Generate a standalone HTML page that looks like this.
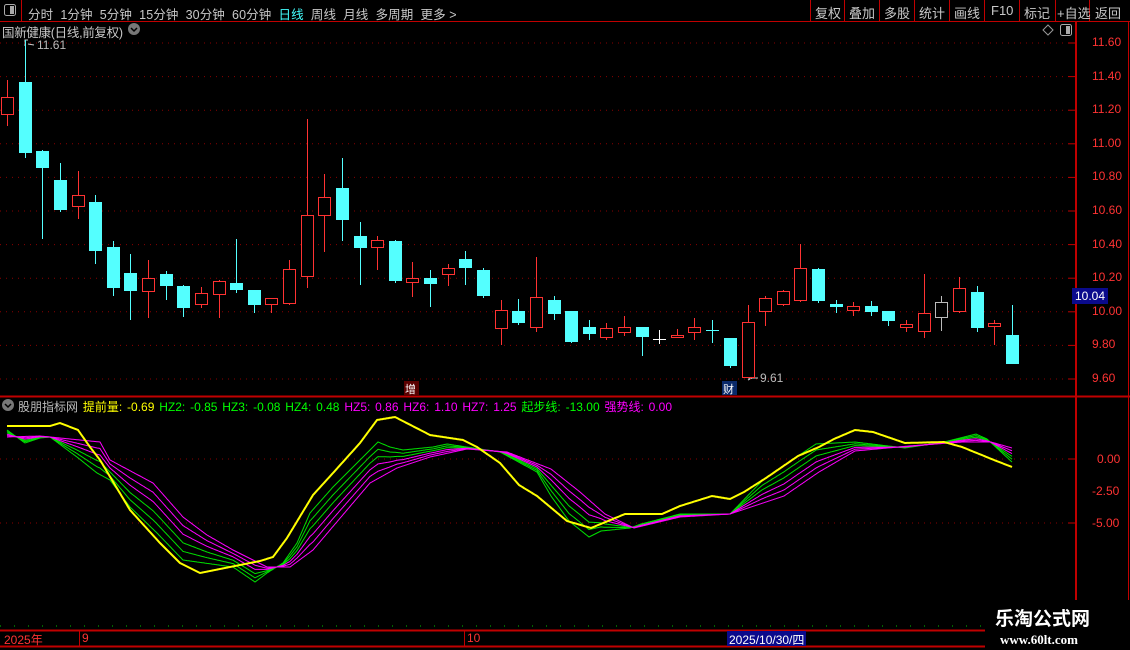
<!DOCTYPE html>
<html><head><meta charset="utf-8"><style>
*{margin:0;padding:0;box-sizing:border-box}
body{width:1130px;height:650px;background:#000;overflow:hidden;position:relative;font-family:"Liberation Sans","Noto Sans CJK SC",sans-serif;color:#c8c8c8}
.t{position:absolute;white-space:nowrap}
</style></head><body>
<svg id="s" width="1130" height="650" style="position:absolute;left:0;top:0" xmlns="http://www.w3.org/2000/svg">
<rect x="0" y="0" width="1130" height="650" fill="#000"/>
<line x1="0" y1="21.5" x2="1130" y2="21.5" stroke="#c00000"/>
<line x1="21.5" y1="0" x2="21.5" y2="21" stroke="#c00000"/>
<rect x="4.5" y="4.5" width="11" height="11" rx="2" fill="none" stroke="#aaa"/>
<rect x="10" y="6" width="4" height="8" fill="#aaa"/>
<g stroke="#c00000">
<line x1="810.5" y1="0" x2="810.5" y2="21"/><line x1="844.5" y1="0" x2="844.5" y2="21"/><line x1="879.5" y1="0" x2="879.5" y2="21"/><line x1="914.5" y1="0" x2="914.5" y2="21"/><line x1="949.5" y1="0" x2="949.5" y2="21"/><line x1="984.5" y1="0" x2="984.5" y2="21"/><line x1="1019.5" y1="0" x2="1019.5" y2="21"/><line x1="1055.5" y1="0" x2="1055.5" y2="21"/><line x1="1089.5" y1="0" x2="1089.5" y2="21"/>
</g>
<line x1="1076" y1="21" x2="1076" y2="630" stroke="#c00000" stroke-width="2"/>
<line x1="1128.5" y1="21" x2="1128.5" y2="630" stroke="#c00000"/>
<line x1="0" y1="396.5" x2="1130" y2="396.5" stroke="#c00000" stroke-width="2"/>
<line x1="0" y1="630.5" x2="985" y2="630.5" stroke="#c00000" stroke-width="2"/>
<line x1="0" y1="646.5" x2="985" y2="646.5" stroke="#c00000" stroke-width="2"/>
<line x1="0" y1="626" x2="985" y2="626" stroke="#00c000" stroke-dasharray="1 13"/>
<line x1="79.5" y1="631" x2="79.5" y2="646" stroke="#c00000"/>
<line x1="464.5" y1="631" x2="464.5" y2="646" stroke="#c00000"/>
<rect x="727" y="631" width="79" height="15" fill="#0a0a8c"/>
<path d="M1048 25 L1053 30 L1048 35 L1043 30 Z" fill="none" stroke="#999"/>
<rect x="1060.5" y="24.5" width="11" height="11" rx="2" fill="none" stroke="#aaa"/>
<rect x="1066" y="26" width="4" height="8" fill="#aaa"/>
<circle cx="134" cy="29" r="6" fill="#777"/><path d="M131 28 L134 31 L137 28" stroke="#000" fill="none" stroke-width="1.5"/>
<circle cx="8" cy="405" r="6" fill="#777"/><path d="M5 404 L8 407 L11 404" stroke="#000" fill="none" stroke-width="1.5"/>
<rect x="1072" y="288" width="36" height="16" fill="#0a0a8c"/>
<rect x="404" y="381" width="15" height="14" fill="#5a0000"/>
<rect x="722" y="381" width="15" height="14" fill="#0a2a6a"/>
<path d="M25 46 L25 40 L28 40 M28 44 L34 45" stroke="#ccc" fill="none"/>
<path d="M748 376 L752 378 L748 380 M748 378 L758 378" stroke="#ccc" fill="none"/>
<g id="grid"></g><g id="cdl"></g><g id="ind"></g>
<rect x="985" y="600" width="145" height="50" fill="#000"/>
</svg>
<div class="t" style="left:28px;top:4px;font-size:12.5px;letter-spacing:0.1px">分时&nbsp; 1分钟&nbsp; 5分钟&nbsp; 15分钟&nbsp; 30分钟&nbsp; 60分钟&nbsp; <span style="color:#4ff">日线</span>&nbsp; 周线&nbsp; 月线&nbsp; 多周期&nbsp; 更多 &gt;</div>
<div class="t" style="left:815px;top:3px;font-size:13px">复权</div>
<div class="t" style="left:849px;top:3px;font-size:13px">叠加</div>
<div class="t" style="left:884px;top:3px;font-size:13px">多股</div>
<div class="t" style="left:919px;top:3px;font-size:13px">统计</div>
<div class="t" style="left:954px;top:3px;font-size:13px">画线</div>
<div class="t" style="left:991px;top:3px;font-size:13px">F10</div>
<div class="t" style="left:1024px;top:3px;font-size:13px">标记</div>
<div class="t" style="left:1057px;top:3px;font-size:13px">+自选</div>
<div class="t" style="left:1095px;top:3px;font-size:13px">返回</div>
<div class="t" style="left:2px;top:22px;font-size:12.5px;letter-spacing:-0.3px">国新健康(日线,前复权)</div>
<div class="t" style="left:37px;top:38px;font-size:12px;color:#bbb">11.61</div>
<div class="t" style="left:760px;top:371px;font-size:12px;color:#bbb">9.61</div>
<div class="t" style="left:405px;top:381px;font-size:11px;color:#fff">增</div>
<div class="t" style="left:723px;top:381px;font-size:11px;color:#fff">财</div>
<div class="t" style="left:1075px;top:289px;font-size:12px;color:#fff">10.04</div>
<div id="ax"></div>
<div class="t" style="left:18px;top:398px;font-size:12px;word-spacing:1.5px"><span style="color:#bbb">股朋指标网</span> <span style="color:#ff0">提前量: -0.69</span> <span style="color:#0f0">HZ2: -0.85 HZ3: -0.08 HZ4: 0.48</span> <span style="color:#f0f">HZ5: 0.86 HZ6: 1.10 HZ7: 1.25</span> <span style="color:#0f0">起步线: -13.00</span> <span style="color:#f0f">强势线: 0.00</span></div>
<div class="t" style="left:1097px;top:452px;font-size:12px;color:#f33">0.00</div>
<div class="t" style="left:1092px;top:484px;font-size:12px;color:#f33">-2.50</div>
<div class="t" style="left:1092px;top:516px;font-size:12px;color:#f33">-5.00</div>
<div class="t" style="left:4px;top:631px;font-size:12px;color:#f33">2025年</div>
<div class="t" style="left:82px;top:631px;font-size:12px;color:#f33">9</div>
<div class="t" style="left:467px;top:631px;font-size:12px;color:#f33">10</div>
<div class="t" style="left:729px;top:631px;font-size:12px;color:#fff">2025/10/30/四</div>
<div class="t" style="left:995px;top:607px;font-size:19px;font-weight:bold;color:#fff;font-family:'Noto Sans CJK SC',sans-serif;line-height:22px">乐淘公式网</div>
<div class="t" style="left:1000px;top:632px;font-size:13px;font-weight:bold;color:#fff;font-family:'Liberation Serif',serif">www.60lt.com</div>
<script>
var NS="http://www.w3.org/2000/svg";
function el(p,t,a){var e=document.createElementNS(NS,t);for(var k in a)e.setAttribute(k,a[k]);p.appendChild(e);return e;}
var g=document.getElementById('grid'),ax=document.getElementById('ax');
for(var i=0;i<11;i++){var p=11.6-i*0.2,y=43+i*33.6;
el(g,'line',{x1:0,y1:y,x2:1068,y2:y,stroke:'#8a0000','stroke-dasharray':'1 5'});
el(g,'line',{x1:1068,y1:y,x2:1076,y2:y,stroke:'#c00000'});
var d=document.createElement('div');d.className='t';d.style.cssText='left:1092px;top:'+(y-8)+'px;font-size:12px;color:#f33';d.textContent=p.toFixed(2);ax.appendChild(d);}
[459,523].forEach(function(y){el(g,'line',{x1:0,y1:y,x2:1068,y2:y,stroke:'#8a0000','stroke-dasharray':'1 5'});el(g,'line',{x1:1068,y1:y,x2:1076,y2:y,stroke:'#c00000'});});
var C=[[7,97,114,80,126,1],[25,82,153,40,158,0],[42,151,168,150,239,0],[60,180,210,163,212,0],[78,195,206,171,219,1],[95,202,251,195,264,0],[113,247,288,241,296,0],[130,273,291,254,320,0],[148,278,291,260,318,1],[166,274,286,271,300,0],[183,286,308,285,317,0],[201,293,304,287,308,1],[219,281,294,280,318,1],[236,283,290,239,293,0],[254,290,305,290,313,0],[271,298,304,298,313,1],[289,269,303,260,305,1],[307,215,276,119,288,1],[324,197,215,174,252,1],[342,188,220,158,241,0],[360,236,248,222,285,0],[377,240,247,236,270,1],[395,241,281,240,283,0],[412,278,282,262,297,1],[430,278,284,270,307,0],[448,268,274,264,286,1],[465,259,268,251,285,0],[483,270,296,268,298,0],[501,310,328,300,345,1],[518,311,323,299,325,0],[536,297,327,257,332,1],[554,300,314,296,320,0],[571,311,342,311,343,0],[589,327,334,320,340,0],[606,328,337,323,340,1],[624,327,332,316,336,1],[642,327,337,327,356,0],[659,339,339,330,344,2],[677,335,337,329,337,1],[694,327,332,318,340,1],[712,330,330,320,343,3],[730,338,366,338,368,0],[748,322,377,305,378,1],[765,298,311,296,326,1],[783,291,304,290,306,1],[800,268,300,244,302,1],[818,269,301,268,303,0],[836,304,307,300,313,0],[853,306,310,302,316,1],[871,306,312,301,316,0],[888,311,321,311,326,0],[906,324,327,320,332,1],[924,313,331,274,338,1],[941,302,317,296,331,4],[959,288,311,277,313,1],[977,292,328,286,332,0],[994,323,326,320,345,1],[1012,335,364,305,364,0]];
var cg=document.getElementById('cdl');
C.forEach(function(c){var x=c[0],col=c[5]==1?'#ff3232':c[5]==2?'#fff':c[5]==4?'#bbb':'#54ffff';
el(cg,'line',{x1:x+.5,y1:c[3],x2:x+.5,y2:c[4],stroke:col});
if(c[5]==1||c[5]==4)el(cg,'rect',{x:x-5.5,y:c[1]+.5,width:12,height:Math.max(c[2]-c[1],1),fill:'#000',stroke:col});
else if(c[2]-c[1]<2)el(cg,'line',{x1:x-6,y1:c[1]+.5,x2:x+7,y2:c[1]+.5,stroke:col});
else el(cg,'rect',{x:x-6,y:c[1],width:13,height:c[2]-c[1],fill:col});});
function samp(P){var v=[];for(var x=7;x<=1012;x++){for(var j=0;j<P.length-1;j++)if(x>=P[j][0]&&x<=P[j+1][0]){var t=(x-P[j][0])/(P[j+1][0]-P[j][0]);v.push(P[j][1]+t*(P[j+1][1]-P[j][1]));break;}}return v;}
var Y=[[7,426],[50,426],[60,423],[78,430],[90,447],[100,460],[130,510],[160,543],[180,563],[200,573],[240,565],[260,561],[273,557],[287,538],[313,495],[333,473],[360,443],[377,420],[395,417],[430,435],[463,440],[477,447],[500,463],[519,485],[537,496],[567,521],[591,528],[625,514],[662,514],[680,506],[712,496],[730,499],[744,492],[766,478],[798,456],[819,447],[834,439],[855,430],[873,432],[905,443],[944,442],[962,447],[994,460],[1012,467]];
var F=[[7,430],[25,443],[40,438],[50,437],[77,457],[97,473],[110,480],[130,507],[157,533],[183,560],[233,567],[255,582],[267,573],[283,563],[297,543],[310,513],[333,487],[360,460],[378,442],[390,447],[403,450],[433,447],[447,444],[467,447],[500,452],[537,472],[551,496],[569,521],[589,537],[601,531],[630,528],[641,524],[680,514],[730,514],[762,481],[798,456],[816,444],[855,442],[905,448],[944,442],[976,434],[987,439],[1012,462]];
var S=[[7,437],[40,436],[100,442],[110,460],[153,483],[183,517],[207,535],[233,550],[267,567],[290,567],[313,550],[347,510],[370,483],[397,468],[430,457],[467,449],[507,452],[551,469],[580,492],[605,514],[634,528],[680,517],[730,514],[784,496],[819,472],[855,451],[909,446],[962,442],[991,442],[1012,448]];
var vy=samp(Y),vf=samp(F),vs=samp(S);
var ig=document.getElementById('ind');
function line(arr,col,w){var d='';arr.forEach(function(y,i){d+=(i?'L':'M')+(7+i)+' '+y.toFixed(1);});el(ig,'path',{d:d,stroke:col,fill:'none','stroke-width':w});}
[[0.4,'#00e000'],[0.2,'#00e000'],[0,'#00e000'],[1,'#ff00ff'],[0.8,'#ff00ff'],[0.6,'#ff00ff']].forEach(function(p){line(vf.map(function(y,i){return y+(vs[i]-y)*p[0];}),p[1],1);});
line(vy,'#ffff00',2);
</script>
</body></html>
